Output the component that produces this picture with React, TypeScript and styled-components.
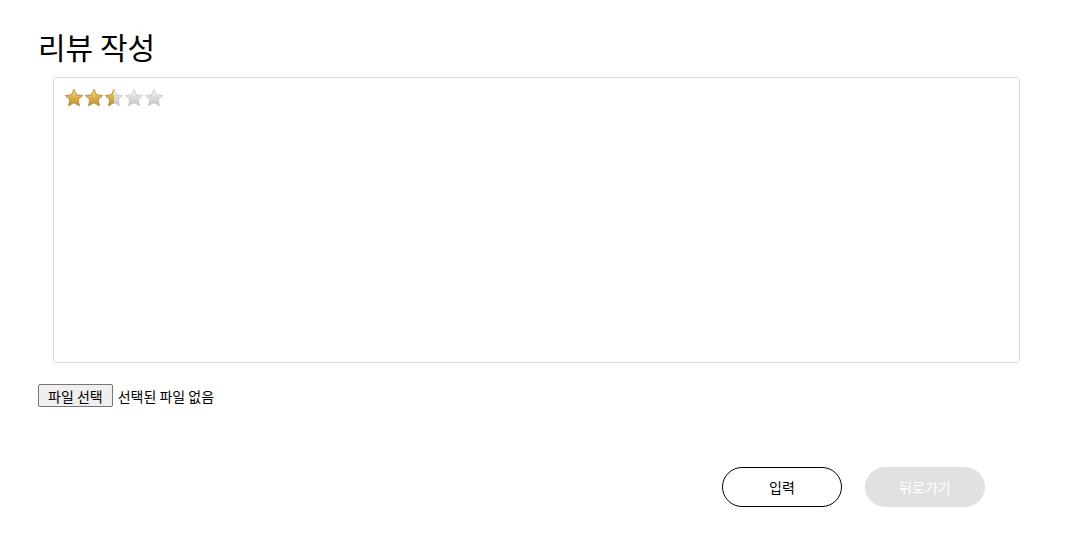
import styled, { createGlobalStyle } from "styled-components";

const GlobalStyle = createGlobalStyle`
  body {
    margin: 0;
    background: #fff;
    font-family: "Noto Sans CJK KR", "Noto Sans", sans-serif;
    color: #000;
  }
`;

const Container = styled.div`
  padding: 24px 38px 0;
`;

const Title = styled.h1`
  margin: 0 0 9px;
  font-size: 30px;
  font-weight: 400;
  line-height: 44px;
`;

const Editor = styled.div`
  margin: 0 21px 0 15px;
  height: 286px;
  border: 1px solid #dddddd;
  border-radius: 3px;
  padding: 10px 10px;
  box-sizing: border-box;
`;

const Stars = styled.div`
  display: flex;
`;

const FileRow = styled.div`
  display: flex;
  align-items: center;
  gap: 5px;
  margin-top: 21px;
  font-size: 14px;
`;

const FileButton = styled.span`
  display: inline-flex;
  align-items: center;
  height: 23px;
  box-sizing: border-box;
  padding: 0 9px;
  background: #efefef;
  border: 1px solid #767676;
  border-radius: 2px;
`;

const Actions = styled.div`
  display: flex;
  justify-content: flex-end;
  gap: 23px;
  margin: 60px 56px 0 0;
`;

const Button = styled.button<{ $muted?: boolean }>`
  width: 120px;
  height: 40px;
  border-radius: 20px;
  font-family: inherit;
  font-size: 14px;
  cursor: pointer;
  border: 1px solid ${(p) => (p.$muted ? "#e1e1e1" : "#000")};
  background: ${(p) => (p.$muted ? "#e1e1e1" : "#fff")};
  color: ${(p) => (p.$muted ? "#fff" : "#000")};
`;

const STAR = "M10 1.2l2.6 5.6 6.1.7-4.5 4.2 1.2 6.1L10 14.8l-5.4 3 1.2-6.1L1.3 7.5l6.1-.7z";

function Star({ fill, id }: { fill: number; id: string }) {
  return (
    <svg width="20" height="20" viewBox="0 0 20 20">
      <defs>
        <linearGradient id={`g${id}`} x1="0" y1="0" x2="0" y2="1">
          <stop offset="0" stopColor="#f6dc8c" />
          <stop offset="0.5" stopColor="#deb04a" />
          <stop offset="1" stopColor="#bf922e" />
        </linearGradient>
        <linearGradient id={`s${id}`} x1="0" y1="0" x2="0" y2="1">
          <stop offset="0" stopColor="#f6f6f6" />
          <stop offset="0.55" stopColor="#d9d9d9" />
          <stop offset="1" stopColor="#c4c4c4" />
        </linearGradient>
        <clipPath id={`c${id}`}>
          <rect x="0" y="0" width={20 * fill} height="20" />
        </clipPath>
      </defs>
      <path d={STAR} fill={`url(#s${id})`} stroke="#bdbdbd" strokeWidth="0.6" />
      {fill > 0 && (
        <path d={STAR} fill={`url(#g${id})`} stroke="#a8821f" strokeWidth="0.6" clipPath={`url(#c${id})`} />
      )}
    </svg>
  );
}

export default function App() {
  const rating = 2.5;
  return (
    <Container>
      <GlobalStyle />
      <Title>리뷰 작성</Title>
      <Editor>
        <Stars>
          {[0, 1, 2, 3, 4].map((i) => (
            <Star key={i} id={String(i)} fill={Math.max(0, Math.min(1, rating - i))} />
          ))}
        </Stars>
      </Editor>
      <FileRow>
        <FileButton>파일 선택</FileButton>
        <span>선택된 파일 없음</span>
      </FileRow>
      <Actions>
        <Button>입력</Button>
        <Button $muted>뒤로가기</Button>
      </Actions>
    </Container>
  );
}
